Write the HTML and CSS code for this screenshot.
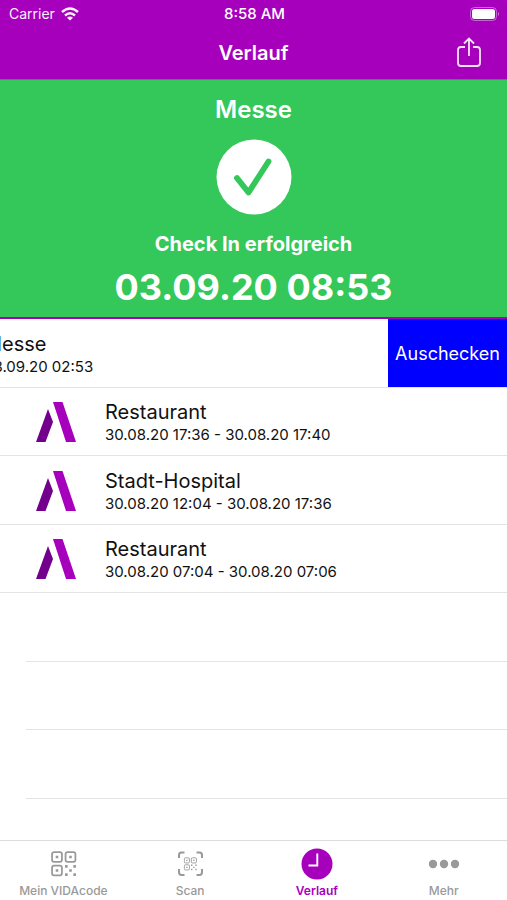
FILE: index.html
```html
<!DOCTYPE html>
<html lang="de">
<head>
<meta charset="utf-8">
<meta name="viewport" content="width=device-width, initial-scale=1">
<title>Verlauf</title>
<link rel="stylesheet" href="styles.css">
</head>
<body>
<svg class="sprite" aria-hidden="true">
  <symbol id="logo" viewBox="0 0 40 40">
    <path d="M12 7L17 20L9.500 40H0Z" fill="#72008c"/>
    <path d="M17 0H26.500L40 40H30Z" fill="#a600bd"/>
  </symbol>
  <symbol id="qr" viewBox="0 0 26 26">
    <g fill="none" stroke="currentColor" stroke-width="1.700">
      <rect x="1.500" y="1.500" width="9.500" height="9.500" rx="2"/>
      <rect x="14.500" y="1.500" width="9.500" height="9.500" rx="2"/>
      <rect x="1.500" y="14.500" width="9.500" height="9.500" rx="2"/>
    </g>
    <path fill="currentColor" d="M5 5h2.500v2.500H5zM18 5h2.500v2.500H18zM5 18h2.500v2.500H5zM14 14h2.500v2.500H14zM22 14h2.500v2.500H22zM18 18h2.500v2.500H18zM14 22h2.500v2.500H14zM22 22h2.500v2.500H22z"/>
  </symbol>
</svg>
<div class="app">
  <header class="header">
    <div class="status">
      <span class="carrier">Carrier
        <svg class="wifi" viewBox="0 0 18 14" aria-hidden="true">
          <g fill="none" stroke="#fff" stroke-width="2.400"><path d="M1 5Q9-2 17 5"/><path d="M4 8.500Q9 4 14 8.500"/></g>
          <path d="M9 13.500L6 10.700Q9 8.500 12 10.700Z" fill="#fff"/>
        </svg>
      </span>
      <time class="clock">8:58 AM</time>
      <svg class="battery" viewBox="0 0 30 14" aria-hidden="true">
        <rect x=".5" y=".5" width="26" height="13" rx="4" fill="none" stroke="#fff" stroke-opacity=".4"/>
        <rect x="2" y="2" width="23" height="10" rx="2.500" fill="#fff"/>
        <path d="M28 5Q30 7 28 9Z" fill="#fff" fill-opacity=".5"/>
      </svg>
    </div>
    <div class="navbar">
      <h1 class="title">Verlauf</h1>
      <button class="share" type="button" aria-label="Teilen">
        <svg viewBox="0 0 26 32" aria-hidden="true">
          <path d="M9 10H5Q2 10 2 13V26Q2 29 5 29H21Q24 29 24 26V13Q24 10 21 10H17M13 19V2M8 6.500L13 1.500L18 6.500" fill="none" stroke="#fff" stroke-opacity=".9" stroke-width="1.800"/>
        </svg>
      </button>
    </div>
  </header>
  <section class="banner">
    <h2 class="place">Messe</h2>
    <svg class="check" viewBox="0 0 76 76" aria-hidden="true">
      <circle cx="38" cy="38" r="37.500" fill="#fff"/>
      <path d="M21 39L32.500 53.500L52.500 22.500" fill="none" stroke="#34c759" stroke-width="5.800" stroke-linecap="round" stroke-linejoin="round"/>
    </svg>
    <p class="message">Check In erfolgreich</p>
    <time class="stamp">03.09.20 08:53</time>
  </section>
  <ul class="list">
    <li class="row swiped">
      <div class="entry"><svg class="logo" aria-hidden="true"><use href="#logo"/></svg><div class="text"><h3>Messe</h3><p>03.09.20 02:53</p></div></div>
      <button class="checkout" type="button">Auschecken</button>
    </li>
    <li class="row"><div class="entry"><svg class="logo" aria-hidden="true"><use href="#logo"/></svg><div class="text"><h3>Restaurant</h3><p>30.08.20 17:36 - 30.08.20 17:40</p></div></div></li>
    <li class="row"><div class="entry"><svg class="logo" aria-hidden="true"><use href="#logo"/></svg><div class="text"><h3>Stadt-Hospital</h3><p>30.08.20 12:04 - 30.08.20 17:36</p></div></div></li>
    <li class="row"><div class="entry"><svg class="logo" aria-hidden="true"><use href="#logo"/></svg><div class="text"><h3>Restaurant</h3><p>30.08.20 07:04 - 30.08.20 07:06</p></div></div></li>
    <li class="row empty" aria-hidden="true"></li>
    <li class="row empty" aria-hidden="true"></li>
    <li class="row empty" aria-hidden="true"></li>
  </ul>
  <nav class="tabs">
    <a class="tab" href="#code"><svg class="icon" viewBox="0 0 32 32" aria-hidden="true"><use href="#qr" x="3.500" y="2.500" width="27" height="27"/></svg>Mein VIDAcode</a>
    <a class="tab" href="#scan"><svg class="icon" viewBox="0 0 32 32" aria-hidden="true">
      <path d="M5 10V7Q5 4.500 7.500 4.500H10.500M22.500 4.500H25.500Q28 4.500 28 7V10M28 21V24Q28 27 25.500 27H22.500M10.500 27H7.500Q5 27 5 24V21" fill="none" stroke="currentColor" stroke-width="2"/>
      <use href="#qr" x="9.500" y="9" width="14" height="14"/></svg>Scan</a>
    <a class="tab active" href="#verlauf" aria-current="page"><svg class="icon" viewBox="0 0 32 32" aria-hidden="true"><circle cx="16" cy="16" r="15.500" fill="currentColor"/><path d="M16.300 5.500V17.500H7.500" fill="none" stroke="#fff" stroke-width="1.900"/></svg>Verlauf</a>
    <a class="tab" href="#mehr"><svg class="icon" viewBox="0 0 32 32" aria-hidden="true"><g fill="currentColor"><circle cx="5" cy="16" r="4.200"/><circle cx="16" cy="16" r="4.200"/><circle cx="27" cy="16" r="4.200"/></g></svg>Mehr</a>
  </nav>
</div>
</body>
</html>
```
FILE: styles.css
```css
* { box-sizing: border-box; margin: 0; padding: 0; }
body { font-family: Inter, "Liberation Sans", sans-serif; color: #111; background: #fff; }
button { font: inherit; color: inherit; border: 0; background: none; }
.sprite { display: none; }
.app { min-height: 100vh; display: flex; flex-direction: column; }
.header { background: #a600bd; color: #fff; border-bottom: 1px solid #8062a0; }
.status { display: grid; grid-template-columns: 1fr auto 1fr; align-items: center; height: 27px; padding: 0 7px 0 9px; font-size: 14px; }
.carrier { display: flex; align-items: center; gap: 6px; opacity: .95; }
.wifi { width: 18px; height: 14px; }
.clock { font-size: 15px; font-weight: 500; }
.battery { width: 30px; height: 14px; justify-self: end; }
.navbar { display: grid; grid-template-columns: 1fr auto 1fr; align-items: center; height: 52px; padding: 0 25px; }
.title { grid-column: 2; font-size: 20px; font-weight: 600; }
.share { justify-self: end; width: 26px; height: 32px; }
.share svg { display: block; width: 26px; height: 32px; }
.banner { display: flex; flex-direction: column; align-items: center; background: #34c759; color: #fff; border-bottom: 2px solid #a600bd; padding: 14px 16px 4px; text-align: center; }
.place { font-size: 24px; line-height: 32px; font-weight: 600; }
.check { width: 76px; height: 76px; margin: 13px 0 15px; }
.message { font-size: 20px; line-height: 28px; font-weight: 700; }
.stamp { font-size: 36px; line-height: 52px; font-weight: 700; padding-top: 3px; }
.list { flex: 1; list-style: none; display: grid; grid-template-rows: repeat(7, 5fr) 3fr; }
.row { display: flex; border-bottom: 1px solid #e4e4e6; overflow: hidden; }
.entry { display: flex; align-items: center; flex: 1 0 100%; padding: 2px 0 0 36px; }
.logo { width: 40px; height: 40px; margin-right: 29px; flex: none; }
.text h3 { font-size: 20px; line-height: 26px; font-weight: 400; }
.text p { font-size: 15px; line-height: 20px; }
.swiped { justify-content: flex-end; }
.swiped .entry { padding-left: 34px; }
.checkout { flex: none; width: 119px; padding-top: 2px; background: #0000fe; color: #fff; font-size: 18px; }
.empty { margin-left: 26px; }
.tabs { display: grid; grid-template-columns: repeat(4, 1fr); height: 60px; border-top: 1px solid #dcdcde; }
.tab { display: flex; flex-direction: column; align-items: center; gap: 3px; padding-top: 7px; font-size: 12px; line-height: 16px; font-weight: 500; color: #999; text-decoration: none; }
.active { color: #a600bd; font-weight: 600; }
.icon { width: 32px; height: 32px; }
```
